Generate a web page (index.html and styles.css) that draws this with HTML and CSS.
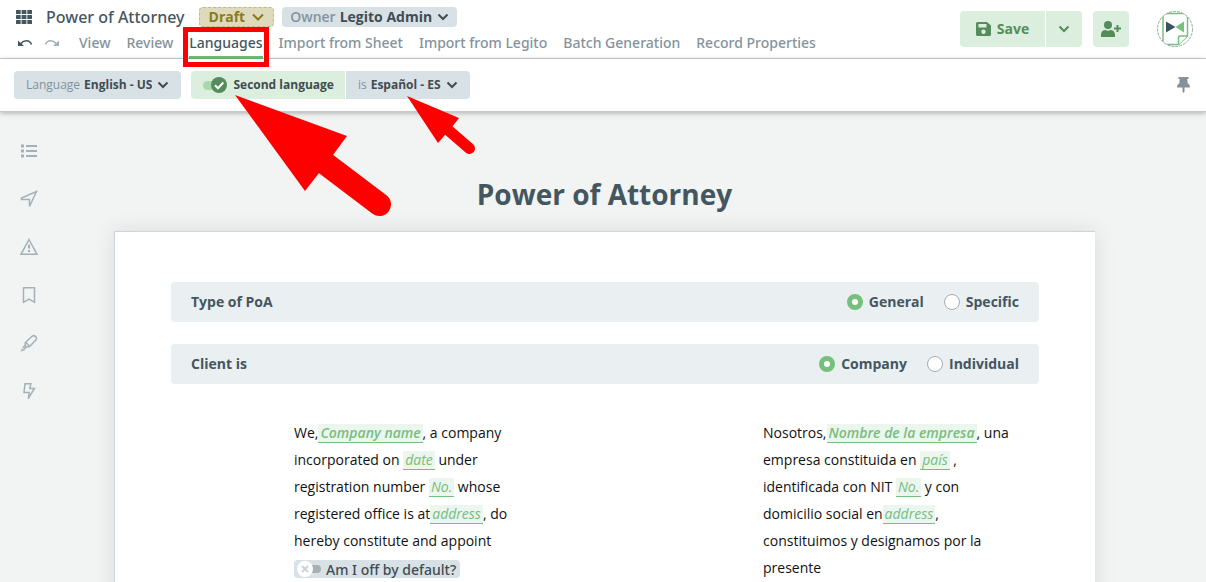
FILE: index.html
```html
<!DOCTYPE html>
<html lang="en">
<head>
    <meta charset="UTF-8">
    <meta name="viewport" content="width=device-width, initial-scale=1.0">
    <title>Power of Attorney</title>
    <link rel="stylesheet" href="styles.css">
</head>
<body>

    <!-- Top bar -->
    <header class="topbar">
        <div class="topbar-left">
            <div class="title-row">
                <button type="button" class="icon-button apps" aria-label="Applications">
                    <svg width="16" height="14" viewBox="0 0 16 14" fill="#44565f">
                        <rect x="0" y="0" width="4.700" height="4" rx=".6"/><rect x="5.600" y="0" width="4.800" height="4" rx=".6"/><rect x="11.300" y="0" width="4.700" height="4" rx=".6"/>
                        <rect x="0" y="5" width="4.700" height="4" rx=".6"/><rect x="5.600" y="5" width="4.800" height="4" rx=".6"/><rect x="11.300" y="5" width="4.700" height="4" rx=".6"/>
                        <rect x="0" y="10" width="4.700" height="4" rx=".6"/><rect x="5.600" y="10" width="4.800" height="4" rx=".6"/><rect x="11.300" y="10" width="4.700" height="4" rx=".6"/>
                    </svg>
                </button>
                <span class="doc-name">Power of Attorney</span>
                <div class="chip chip-status">
                    <select id="status" aria-label="Status"><option>Draft</option></select>
                    <svg class="chevron" width="12" height="8" viewBox="0 0 12 8"><path d="M1 1.500 6 6.500l5-5"/></svg>
                </div>
                <div class="chip chip-owner">
                    <label for="owner">Owner</label>
                    <select id="owner"><option>Legito Admin</option></select>
                    <svg class="chevron" width="12" height="8" viewBox="0 0 12 8"><path d="M1.500 1.500 6 6l4.500-4.500"/></svg>
                </div>
            </div>
            <nav class="menu">
                <button type="button" class="icon-button undo" aria-label="Undo">
                    <svg width="15" height="9" viewBox="0 0 15 9"><path d="M0 1.500V7h6z" fill="#44565f"/><path d="M3 4.500C6 .8 11.500.5 13.500 5.500" fill="none" stroke="#44565f" stroke-width="1.700"/></svg>
                </button>
                <button type="button" class="icon-button redo" aria-label="Redo">
                    <svg width="15" height="9" viewBox="0 0 15 9"><path d="M15 1.500V7H9z" fill="#a3b1b9"/><path d="M12 4.500C9 .8 3.500.5 1.500 5.500" fill="none" stroke="#a3b1b9" stroke-width="1.700"/></svg>
                </button>
                <a href="#view">View</a>
                <a href="#review">Review</a>
                <a href="#languages" class="active">Languages</a>
                <a href="#sheet">Import from Sheet</a>
                <a href="#legito">Import from Legito</a>
                <a href="#batch">Batch Generation</a>
                <a href="#record">Record Properties</a>
            </nav>
        </div>
        <div class="topbar-right">
            <div class="save-group">
                <button type="button" class="save">
                    <svg width="15" height="14" viewBox="0 0 15 14"><path fill="#558c5c" fill-rule="evenodd" d="M1.500 0H11l4 3.500v9a1.500 1.500 0 0 1-1.500 1.500h-12A1.500 1.500 0 0 1 0 12.500v-11A1.500 1.500 0 0 1 1.500 0zM2.500 2v3.500h8V2zM7.500 7.500a2.200 2.200 0 1 0 0 4.400 2.200 2.200 0 0 0 0-4.400z"/></svg>
                    Save
                </button>
                <button type="button" class="save-more" aria-label="More save options">
                    <svg class="chevron" width="12" height="8" viewBox="0 0 12 8"><path d="M1.500 1.500 6 6l4.500-4.500"/></svg>
                </button>
            </div>
            <button type="button" class="share" aria-label="Add user">
                <svg width="20" height="16" viewBox="0 0 20 16" fill="#558c5c"><circle cx="7" cy="4" r="4"/><path d="M0 16v-2.500A4.500 4.500 0 0 1 4.500 9c1.500.9 3.500.9 5 0a4.500 4.500 0 0 1 4.500 4.500V16z"/><path d="M15.500 4h2v2.500H20v2h-2.500V11h-2V8.500H13v-2h2.500z"/></svg>
            </button>
            <button type="button" class="icon-button avatar" aria-label="Account">
                <svg width="36" height="36" viewBox="0 0 36 36">
                    <defs><clipPath id="round"><circle cx="18" cy="18" r="17.500"/></clipPath></defs>
                    <g clip-path="url(#round)">
                        <path d="M6 0v36M30.500 2v23L21.500 33.500H6M6 2.500h24.500" fill="none" stroke="#74c07c" stroke-width="1.500"/>
                        <path d="M21.500 33.500v-6.500a2 2 0 0 1 2-2h7" fill="#fff" stroke="#74c07c" stroke-width="1.500"/>
                    </g>
                    <path d="M9 10.500 18.500 16 9 21.500z" fill="#3d535e"/>
                    <path d="M27 10.500 18.500 16l8.500 5.500z" fill="#74c07c"/>
                    <circle cx="18" cy="18" r="17.500" fill="none" stroke="#9aa4a8" stroke-dasharray="3 1"/>
                </svg>
            </button>
        </div>
    </header>

    <!-- Language settings -->
    <div class="toolbar">
        <div class="chip chip-language">
            <label for="language">Language</label>
            <select id="language"><option>English - US</option></select>
            <svg class="chevron" width="12" height="8" viewBox="0 0 12 8"><path d="M1.500 1.500 6 6l4.500-4.500"/></svg>
        </div>
        <div class="second-language">
            <label class="chip chip-toggle">
                <span class="switch">
                    <input type="checkbox" checked>
                    <svg width="24" height="16" viewBox="0 0 24 16"><rect x="0" y="4" width="18" height="9" rx="4.500" fill="#a9d9ab"/><circle cx="16" cy="8" r="8" fill="#558c5c"/><path d="m12 8.300 3 2.900 5.300-5.700" fill="none" stroke="#fff" stroke-width="2"/></svg>
                </span>
                Second language
            </label>
            <div class="chip chip-second">
                <label for="second">is</label>
                <select id="second"><option>Español - ES</option></select>
                <svg class="chevron" width="12" height="8" viewBox="0 0 12 8"><path d="M1.500 1.500 6 6l4.500-4.500"/></svg>
            </div>
        </div>
        <button type="button" class="icon-button pin" aria-label="Pin toolbar">
            <svg width="13" height="16" viewBox="0 0 13 16" fill="#83929b"><path d="M1.500 0h10v2h-1.200l.4 4.200c1.400.7 2.300 2 2.300 4.300H0c0-2.300.9-3.600 2.300-4.300L2.700 2H1.500z"/><path d="M5.500 10h2v4.500l-1 1.500-1-1.500z"/></svg>
        </button>
        <svg class="arrows" width="242" height="124" viewBox="234 94 242 124">
            <path d="M235 95 347 136 333 155 319 173 305 191z"/>
            <path d="M322 161 379.500 204.500" stroke-width="23"/>
            <path d="M407 96 459 118 452 127 445 135 438 143z"/>
            <path d="M447 129 469.500 148.500" stroke-width="11"/>
        </svg>
    </div>

    <div class="workspace">
        <!-- Side panel -->
        <aside class="sidebar">
            <button type="button" class="icon-button" aria-label="Contents">
                <svg width="18" height="18" viewBox="0 0 18 18"><path d="M6 4h11M6 9h11M6 14h11" stroke-width="2"/><path d="M1 4h3M1 9h3M1 14h3" stroke-width="3"/></svg>
            </button>
            <button type="button" class="icon-button" aria-label="Navigate">
                <svg width="18" height="18" viewBox="0 0 18 18"><path d="M16.500 1.500 9.500 16.500V9.500H1.500V8z"/></svg>
            </button>
            <button type="button" class="icon-button" aria-label="Warnings">
                <svg width="18" height="18" viewBox="0 0 18 18"><path d="M9 1.500 17 16.300H1z"/><path d="M9 6.500v4M9 12v2" stroke-width="2"/></svg>
            </button>
            <button type="button" class="icon-button" aria-label="Bookmarks">
                <svg width="18" height="18" viewBox="0 0 18 18"><path d="M3.500 1.800h11v14.500L9 13.200l-5.500 3.100z"/></svg>
            </button>
            <button type="button" class="icon-button" aria-label="Highlights">
                <svg width="18" height="18" viewBox="0 0 18 18"><path d="M5.300 8.500 12 2.300c2.500-1.800 5.500.7 4 3.400L9.700 12.500l-3 .5-1.500-1.500zM5.600 8.200l4.300 4.300M5.200 11.500 3.500 13l1.500 1.500 1.700-1.500"/><path d="M1 17l1.500-2.500L4.500 16z" stroke-width="1"/></svg>
            </button>
            <button type="button" class="icon-button" aria-label="Automation">
                <svg width="18" height="18" viewBox="0 0 18 18"><path d="M5 1.800h5.800L9.800 6.500h4.700L8.200 16.500 9.200 10.500H4z"/></svg>
            </button>
        </aside>

        <main class="document">
            <h1>Power of Attorney</h1>
            <form class="paper">
                <fieldset class="question">
                    <legend>Type of PoA</legend>
                    <label><input type="radio" name="type" checked>General</label>
                    <label><input type="radio" name="type">Specific</label>
                </fieldset>
                <fieldset class="question">
                    <legend>Client is</legend>
                    <label><input type="radio" name="client" checked>Company</label>
                    <label><input type="radio" name="client">Individual</label>
                </fieldset>

                <div class="clauses">
                    <p>We,<input type="text" class="blank strong" size="10" placeholder="Company name" aria-label="Company name">, a company incorporated on <input type="text" class="blank" size="2" placeholder="date" aria-label="Date"> under registration number <input type="text" class="blank" size="2" placeholder="No." aria-label="Number"> whose registered office is at<input type="text" class="blank" size="4" placeholder="address" aria-label="Address">, do hereby constitute and appoint
                        <label class="option">
                            <span class="switch">
                                <input type="checkbox">
                                <svg width="24" height="16" viewBox="0 0 24 16"><rect x="6" y="4" width="18" height="8" rx="4" fill="#a8b0b4"/><circle cx="8" cy="8" r="8" fill="#fff"/><path d="m5 5 6 6M11 5l-6 6" stroke="#ccd3d7" stroke-width="2"/></svg>
                            </span>
                            Am I off by default?
                        </label>
                    </p>
                    <p lang="es">Nosotros,<input type="text" class="blank strong" size="14" placeholder="Nombre de la empresa" aria-label="Nombre de la empresa">, una empresa constituida en <input type="text" class="blank" size="2" placeholder="país" aria-label="País"> , identificada con NIT <input type="text" class="blank" size="2" placeholder="No." aria-label="NIT"> y con domicilio social en<input type="text" class="blank" size="4" placeholder="address" aria-label="Domicilio">, constituimos y designamos por la presente</p>
                </div>
            </form>
        </main>
    </div>

</body>
</html>
```
FILE: styles.css
```css
* {
    box-sizing: border-box;
}
body {
    margin: 0;
    height: 100vh;
    display: flex;
    flex-direction: column;
    overflow: hidden;
    font-family: "Open Sans", sans-serif;
    font-size: 14px;
    line-height: 18px;
    color: #44565f;
    background-color: #f2f4f3;
}
button,
input,
select {
    font: inherit;
    color: inherit;
}
button {
    padding: 0;
    border: none;
    cursor: pointer;
}
.icon-button {
    display: flex;
    background: none;
}

/* Top bar */
.topbar {
    flex: none;
    display: flex;
    justify-content: space-between;
    height: 59px;
    padding: 0 13px 0 16px;
    background-color: #fff;
    border-bottom: 1px solid #d3d5d6;
}
.title-row {
    display: flex;
    align-items: center;
    height: 20px;
    margin-top: 7px;
}
.doc-name {
    margin: 0 14px;
    font-family: "Noto Sans", sans-serif;
    font-size: 16px;
    font-weight: 500;
}
.menu {
    display: flex;
    align-items: center;
    gap: 16px;
    height: 32px;
    font-family: "Noto Sans", sans-serif;
}
.menu .undo {
    margin-left: 2px;
    margin-right: -5px;
}
.menu .redo {
    margin-right: 4px;
}
.menu a {
    position: relative;
    line-height: 32px;
    font-weight: 500;
    color: #84939c;
    text-decoration: none;
}
.menu a.active {
    color: #44565f;
    box-shadow: inset 0 -3px #6fbf78;
}
/* Red frame around the current tab */
.menu a.active::after {
    content: "";
    position: absolute;
    inset: 0 -6px -8px;
    border: 5px solid #f00;
    z-index: 3;
}

/* Chips with a drop-down */
.chip {
    display: flex;
    align-items: center;
    background-color: #d8e1e6;
    border-radius: 4px;
    white-space: nowrap;
    color: #414c52;
    font-weight: 600;
}
.chip select {
    appearance: none;
    field-sizing: content;
    margin-right: -14px;
    padding: 0 19px 0 0;
    border: none;
    background: none;
    font-weight: 700;
    cursor: pointer;
}
.chip label {
    margin-right: 4px;
    color: #84939c;
}
.chevron {
    fill: none;
    stroke: currentColor;
    stroke-width: 2;
    pointer-events: none;
}
.chip-status {
    height: 20px;
    margin-right: 8px;
    padding: 0 9px;
    border: 1px dashed #c0b98a;
    background-color: #dfdabb;
    color: #877c1c;
}
.chip-status select {
    padding-right: 21px;
}
.chip-owner {
    height: 20px;
    padding: 0 8px;
}
.chip-owner label {
    font-weight: 600;
}

/* Save, share, account */
.topbar-right {
    display: flex;
    height: 36px;
    margin-top: 11px;
    color: #558c5c;
}
.save-group {
    display: flex;
    gap: 1px;
    margin-right: 11px;
}
.save,
.save-more,
.share {
    display: flex;
    align-items: center;
    justify-content: center;
    width: 36px;
    color: #558c5c;
    background-color: #dceedd;
    border-radius: 4px;
}
.save {
    width: 85px;
    gap: 6px;
    font-weight: 700;
    border-radius: 4px 0 0 4px;
}
.save-more {
    border-radius: 0 4px 4px 0;
}
.avatar {
    margin-left: 28px;
}

/* Language toolbar */
.toolbar {
    position: relative;
    z-index: 2;
    flex: none;
    display: flex;
    align-items: center;
    gap: 10px;
    height: 53px;
    padding: 0 16px 0 14px;
    background-color: #fff;
    border-bottom: 1px solid #c6c8c8;
    box-shadow: 0 1px 5px rgba(0, 0, 0, 0.3);
    font-size: 12px;
}
.toolbar .chip {
    height: 28px;
    padding: 0 12px;
    font-weight: 700;
}
.toolbar .chip label {
    font-weight: 400;
}
.second-language {
    display: flex;
    gap: 1px;
}
.toolbar .chip-toggle {
    padding-right: 11px;
    gap: 6px;
    border-radius: 4px 0 0 4px;
    background-color: #dceedd;
}
.toolbar .chip-second {
    border-radius: 0 4px 4px 0;
}
.pin {
    margin-left: auto;
}
.switch {
    position: relative;
    display: inline-flex;
}
.switch input {
    position: absolute;
    inset: 0;
    margin: 0;
    width: 100%;
    height: 100%;
    opacity: 0;
}
.arrows {
    position: absolute;
    top: 35px;
    left: 234px;
    fill: #f00;
    stroke: #f00;
    stroke-width: 0;
    stroke-linecap: round;
    pointer-events: none;
}

/* Workspace */
.workspace {
    flex: 1;
    min-height: 0;
    display: grid;
    grid-template-columns: 59px 1fr 56px;
}
.sidebar {
    display: flex;
    flex-direction: column;
    align-items: center;
    gap: 30px;
    padding: 30px 1px 0 0;
}
.sidebar svg {
    fill: none;
    stroke: #a3b1b8;
    stroke-width: 1.5;
}
.document h1 {
    margin: 62px 0 17px;
    font-size: 28px;
    line-height: 40px;
    font-weight: 700;
    text-align: center;
}
.paper {
    max-width: 981px;
    min-height: 800px;
    margin: 0 auto;
    padding: 50px 56px;
    background-color: #fff;
    border: 1px solid #cbd4da;
    border-right: none;
    box-shadow: 0 0 20px rgba(0, 0, 0, 0.1);
}
.question {
    display: flex;
    align-items: center;
    gap: 20px;
    height: 40px;
    margin: 0 0 22px;
    padding: 0 20px;
    border: none;
    border-radius: 4px;
    background-color: #eaeff2;
    font-weight: 700;
}
.question legend {
    float: left;
    margin-right: auto;
    padding: 0;
}
.question label {
    display: flex;
    align-items: center;
    gap: 6px;
}
.question input {
    appearance: none;
    width: 16px;
    height: 16px;
    margin: 0;
    border: 1px solid #a4adb2;
    border-radius: 50%;
    background-color: #fff;
}
.question input:checked {
    border: 5px solid #74c07c;
}

/* Clauses in both languages */
.clauses {
    display: flex;
    justify-content: space-between;
    padding: 13px 24px 0 123px;
    line-height: 27px;
    color: #111;
}
.clauses p {
    width: 252px;
    margin: 0;
}
.blank {
    field-sizing: content;
    height: 19px;
    padding: 0 2px;
    border: none;
    border-bottom: 1px solid #74c07c;
    background-color: #edf5ef;
    font-style: italic;
}
.blank.strong {
    font-weight: 600;
}
.blank::placeholder {
    color: #74c07c;
}
.option {
    display: inline-flex;
    align-items: center;
    gap: 5px;
    height: 18px;
    padding: 0 4px 0 3px;
    border-radius: 4px;
    background-color: #d8e1e6;
    color: #414c52;
    font-family: "Noto Sans", sans-serif;
    font-weight: 500;
    vertical-align: middle;
    white-space: nowrap;
}
```
